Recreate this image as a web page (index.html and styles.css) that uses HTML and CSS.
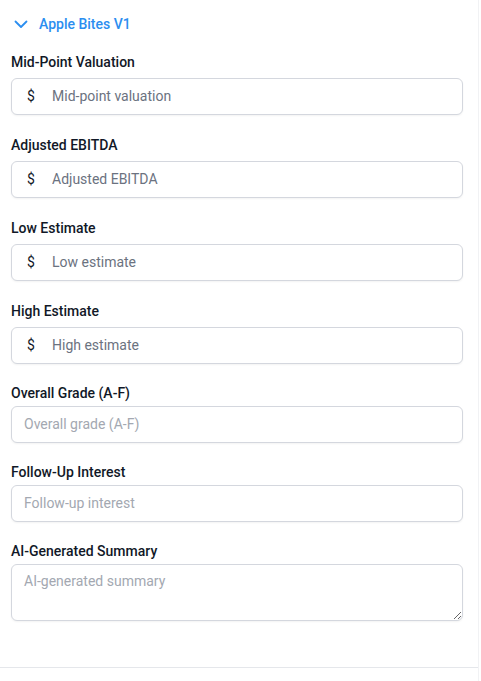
FILE: index.html
```html
<!DOCTYPE html>
<html lang="en">
<head>
<meta charset="utf-8">
<title>Apple Bites V1</title>
<link rel="stylesheet" href="styles.css">
</head>
<body>
<div class="panel">
  <div class="section-header">
    <svg class="chevron" width="14" height="9" viewBox="0 0 14 9"><path d="M1.5 1.5 L7 7 L12.5 1.5" fill="none" stroke="#2b8ef0" stroke-width="1.8" stroke-linecap="round" stroke-linejoin="round"/></svg>
    <span class="section-title">Apple Bites V1</span>
  </div>
  <div class="fields">
    <div class="field money-field">
      <label class="label money-label">Mid-Point Valuation</label>
      <div class="input-box money"><span class="currency">$</span><input class="input money-input" placeholder="Mid-point valuation"></div>
    </div>
    <div class="field money-field">
      <label class="label money-label">Adjusted EBITDA</label>
      <div class="input-box money"><span class="currency">$</span><input class="input money-input" placeholder="Adjusted EBITDA"></div>
    </div>
    <div class="field money-field">
      <label class="label money-label">Low Estimate</label>
      <div class="input-box money"><span class="currency">$</span><input class="input money-input" placeholder="Low estimate"></div>
    </div>
    <div class="field money-field">
      <label class="label money-label">High Estimate</label>
      <div class="input-box money"><span class="currency">$</span><input class="input money-input" placeholder="High estimate"></div>
    </div>
    <div class="field">
      <label class="label">Overall Grade (A-F)</label>
      <input class="input-box plain" placeholder="Overall grade (A-F)">
    </div>
    <div class="field">
      <label class="label">Follow-Up Interest</label>
      <input class="input-box plain" placeholder="Follow-up interest">
    </div>
    <div class="field">
      <label class="label">AI-Generated Summary</label>
      <textarea class="input-box textarea" placeholder="AI-generated summary"></textarea>
    </div>
  </div>
  <div class="divider"></div>
</div>
</body>
</html>
```

FILE: styles.css
```css
html, body {
  margin: 0;
  padding: 0;
  background: #ffffff;
}

body {
  font-family: Roboto, "Liberation Sans", Arial, sans-serif;
  color: #111827;
}

.panel {
  width: 479px;
  height: 681px;
  box-sizing: border-box;
  border-right: 1px solid #f1f2f4;
  padding-top: 14px;
}

.section-header {
  display: flex;
  align-items: center;
  height: 20px;
  padding-left: 14px;
  gap: 11px;
}

.chevron {
  display: block;
  margin-top: 1px;
}

.section-title {
  color: #2b8ef0;
  font-size: 14px;
  font-weight: 500;
  line-height: 20px;
}

.fields {
  display: flex;
  flex-direction: column;
  gap: 19px;
  margin-top: 18px;
  padding-left: 11px;
  padding-right: 15px;
}

.money-field + .money-field {
  margin-top: 1px;
}

.field {
  display: flex;
  flex-direction: column;
}

.label {
  font-size: 14px;
  font-weight: 500;
  line-height: 20px;
  color: #111827;
  margin-bottom: 3px;
}

.money-label {
  margin-bottom: 6px;
}

.input-box {
  box-sizing: border-box;
  width: 452px;
  height: 37px;
  border: 1px solid #d4d7de;
  border-radius: 6px;
  background: #ffffff;
  box-shadow: 0 1px 2px rgba(0, 0, 0, 0.05);
  font-family: Roboto, "Liberation Sans", Arial, sans-serif;
  font-size: 14px;
  margin: 0;
}

.money {
  display: flex;
  align-items: center;
  padding-left: 15px;
  padding-bottom: 2px;
}

.currency {
  width: 25px;
  font-size: 14px;
  color: #111827;
}

.input {
  border: none;
  outline: none;
  background: transparent;
  flex: 1;
  font-family: Roboto, "Liberation Sans", Arial, sans-serif;
  font-size: 14px;
  padding: 0;
  color: #111827;
}

.money-input::placeholder {
  color: #6b7280;
}

.plain {
  padding: 0 12px 2px;
  outline: none;
  color: #111827;
}

.plain::placeholder,
.textarea::placeholder {
  color: #a3a8b1;
}

.textarea {
  height: 57px;
  padding: 6px 12px;
  line-height: 20px;
  resize: vertical;
  outline: none;
}

.divider {
  margin-top: 46px;
  height: 1px;
  background: #e5e7eb;
}
```
